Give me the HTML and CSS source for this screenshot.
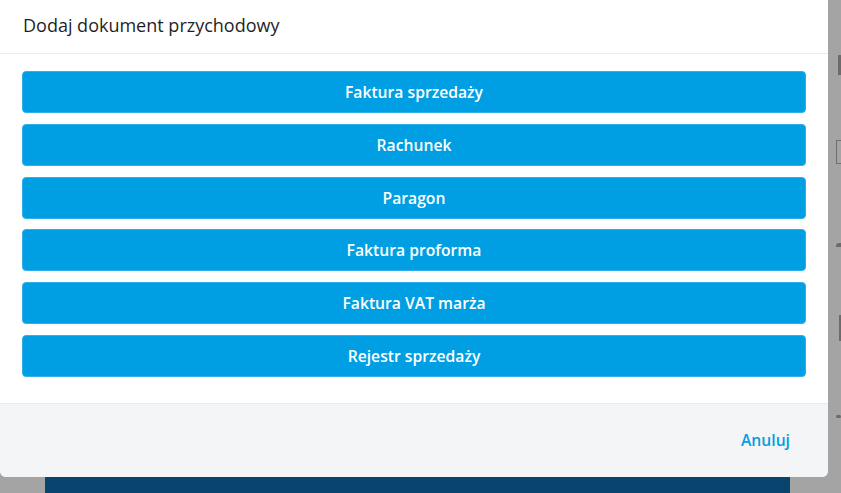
FILE: index.html
```html
<!DOCTYPE html>
<html lang="pl">
<head>
<meta charset="utf-8">
<link rel="stylesheet" href="styles.css">
</head>
<body>
<div class="page">
  <div class="side-icons">
    <span class="ic ic1"></span>
    <span class="ic ic2"></span>
    <span class="ic ic3"></span>
    <span class="ic ic4"></span>
    <span class="ic ic5"></span>
  </div>
  <div class="bottom-bar"></div>
  <div class="modal">
    <div class="modal-header">Dodaj dokument przychodowy</div>
    <div class="modal-body">
      <button class="btn">Faktura sprzedaży</button>
      <button class="btn">Rachunek</button>
      <button class="btn">Paragon</button>
      <button class="btn">Faktura proforma</button>
      <button class="btn">Faktura VAT marża</button>
      <button class="btn">Rejestr sprzedaży</button>
    </div>
    <div class="modal-footer">
      <a class="cancel">Anuluj</a>
    </div>
  </div>
</div>
</body>
</html>
```
FILE: styles.css
```css
html, body {
  margin: 0;
  padding: 0;
}
body {
  width: 841px;
  height: 493px;
  overflow: hidden;
  background: #a4a4a4;
  font-family: "Open Sans", "Noto Sans", sans-serif;
}
.page {
  position: relative;
  width: 841px;
  height: 493px;
}
.bottom-bar {
  position: absolute;
  left: 45px;
  top: 477px;
  width: 745px;
  height: 16px;
  background: #08446d;
}
.side-icons .ic {
  position: absolute;
  background: #6b6b6b;
}
.ic1 { left: 838px; top: 55px; width: 3px; height: 20px; }
.ic2 { left: 836px; top: 140px; width: 5px; height: 22px; background: transparent !important; border: 1px solid #707070; }
.ic3 { left: 836px; top: 243px; width: 5px; height: 4px; border-radius: 3px 0 0 0; }
.ic4 { left: 839px; top: 315px; width: 2px; height: 26px; }
.ic5 { left: 836px; top: 415px; width: 5px; height: 3px; border-radius: 2px; }
.modal {
  position: absolute;
  left: 0;
  top: 0;
  width: 828px;
  height: 477px;
  background: #ffffff;
  border-radius: 0 0 6px 6px;
  display: flex;
  flex-direction: column;
  overflow: hidden;
}
.modal-header {
  height: 54px;
  box-sizing: border-box;
  border-bottom: 1px solid #e8ecf0;
  padding: 0 23px 4px;
  display: flex;
  align-items: center;
  font-size: 18px;
  color: #1f1f1f;
}
.modal-body {
  padding: 17px 22px 26px;
  display: flex;
  flex-direction: column;
  gap: 10.8px;
}
.btn {
  height: 42px;
  border: 1px solid #2fb0ea;
  border-radius: 4px;
  background: #009fe3;
  color: #ffffff;
  font-family: "Open Sans", "Noto Sans", sans-serif;
  font-size: 15.7px;
  font-weight: 600;
  padding: 0;
  cursor: pointer;
}
.modal-footer {
  flex: 1;
  background: #f4f5f7;
  border-top: 1px solid #e8ecf0;
  display: flex;
  align-items: center;
  justify-content: flex-end;
  padding: 0 38px 0 0;
}
.cancel {
  color: #009fe3;
  font-size: 15.7px;
  font-weight: 600;
  cursor: pointer;
}
```
